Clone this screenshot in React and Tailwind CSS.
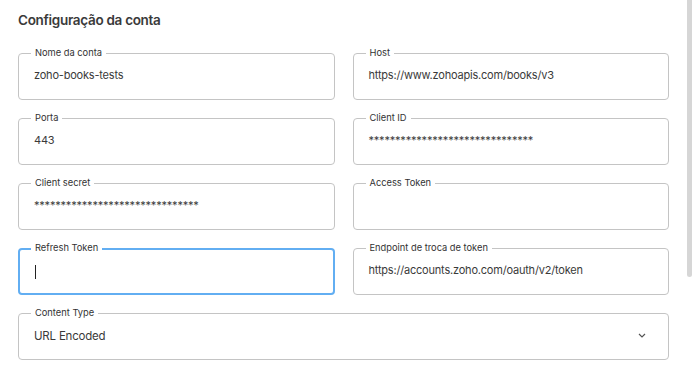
import React from "react";

const stars = "*******************************";

const Field = ({ label, value, focused }) => (
    <div
        className={`relative h-[47px] rounded-[4px] flex items-center pl-[15px] pb-[2px] ${
            focused ? "border-2 border-[#62aef2] pl-[14px]" : "border border-[#c4c4c4]"
        }`}
    >
        <span
            className={`absolute ${focused ? "-top-[8px] left-[11px]" : "-top-[7px] left-[12px]"} px-1 bg-white text-[9.3px] leading-[12px] text-[#333]`}
        >
            {label}
        </span>
        {focused ? (
            <span className="w-px h-[14px] bg-[#222] mt-[2px]"></span>
        ) : (
            <span className="text-[11px] tracking-[-0.2px] text-[#3a3a3a]">{value}</span>
        )}
    </div>
);

export default function App() {
    return (
        <div className="relative w-[692px] h-[377px] overflow-hidden bg-white" style={{ fontFamily: "Inter, 'Noto Sans', sans-serif" }}>
            <div className="pl-[18px] pr-[23px] pt-[10px]">
                <h1 className="text-[13.5px] leading-[20px] tracking-[-0.3px] font-semibold text-[#3a3a3a]">Configuração da conta</h1>

                <div className="grid grid-cols-2 gap-x-[18px] gap-y-[18px] mt-[23px]">
                    <Field label="Nome da conta" value="zoho-books-tests" />
                    <Field label="Host" value="https://www.zohoapis.com/books/v3" />
                    <Field label="Porta" value="443" />
                    <Field label="Client ID" value={stars} />
                    <Field label="Client secret" value={stars} />
                    <Field label="Access Token" value="" />
                    <Field label="Refresh Token" focused />
                    <Field label="Endpoint de troca de token" value="https://accounts.zoho.com/oauth/v2/token" />
                </div>

                <div className="relative h-[47px] mt-[18px] rounded-[4px] border border-[#c4c4c4] flex items-center justify-between pl-[15px] pr-[22px]">
                    <span className="absolute -top-[7px] left-[12px] px-1 bg-white text-[9.3px] leading-[12px] text-[#333]">Content Type</span>
                    <span className="text-[11.5px] tracking-[-0.2px] text-[#3a3a3a]">URL Encoded</span>
                    <svg width="8" height="5" viewBox="0 0 8 5" className="mt-[-2px]">
                        <path d="M1 1 L4 4 L7 1" fill="none" stroke="#555" strokeWidth="1.2" />
                    </svg>
                </div>
            </div>

            {/* scrollbar thumb */}
            <div className="absolute top-0 right-0 w-[5px] h-[277px] bg-[#d6d6d6] rounded-b-full"></div>
        </div>
    );
}
